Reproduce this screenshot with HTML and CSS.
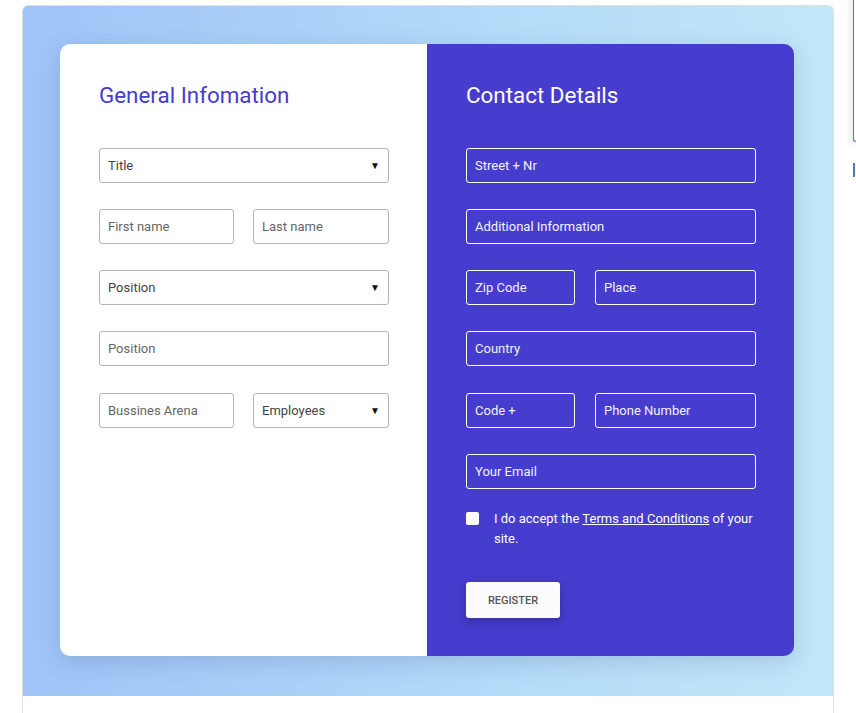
FILE: index.html
```html
<!DOCTYPE html>
<html>
<head>
<meta charset="utf-8">
<link rel="stylesheet" href="styles.css">
</head>
<body>
<div class="page">
  <div class="hero">
    <div class="card">
      <div class="panel panel-left">
        <h2 class="title title-left">General Infomation</h2>
        <div class="rows">
          <div class="field select"><span>Title</span><span class="arrow">&#9660;</span></div>
          <div class="row2 eq">
            <input class="field" placeholder="First name">
            <input class="field" placeholder="Last name">
          </div>
          <div class="field select"><span>Position</span><span class="arrow">&#9660;</span></div>
          <input class="field" placeholder="Position">
          <div class="row2 eq">
            <input class="field" placeholder="Bussines Arena">
            <div class="field select"><span>Employees</span><span class="arrow">&#9660;</span></div>
          </div>
        </div>
      </div>
      <div class="panel panel-right">
        <h2 class="title title-right">Contact Details</h2>
        <div class="rows">
          <input class="field dark" placeholder="Street + Nr">
          <input class="field dark" placeholder="Additional Information">
          <div class="row2 uneq">
            <input class="field dark" placeholder="Zip Code">
            <input class="field dark" placeholder="Place">
          </div>
          <input class="field dark" placeholder="Country">
          <div class="row2 uneq">
            <input class="field dark" placeholder="Code +">
            <input class="field dark" placeholder="Phone Number">
          </div>
          <input class="field dark" placeholder="Your Email">
        </div>
        <label class="terms">
          <span class="box"></span>
          <span class="terms-text">I do accept the <a href="#">Terms and Conditions</a> of your site.</span>
        </label>
        <button class="register">REGISTER</button>
      </div>
    </div>
  </div>
  <div class="below"></div>
</div>
<div class="edge-box"></div>
<div class="edge-mark"></div>
</body>
</html>
```
FILE: styles.css
```css
* { box-sizing: border-box; }
html, body { margin: 0; padding: 0; background: #fff; }
body {
  font-family: Roboto, "Liberation Sans", sans-serif;
  padding: 5px 0 0 22px;
  overflow: hidden;
  height: 713px;
}
.page {
  width: 812px;
  border: 1px solid #e0e0e0;
  border-bottom: none;
  border-radius: 6px 6px 0 0;
  overflow: hidden;
}
.hero {
  background: linear-gradient(to right, #a0c3f7 0%, #b4dbf8 60%, #c2e7f8 100%);
  padding: 38px 39px 40px 37px;
}
.below { height: 30px; background: #fff; }
.card {
  display: flex;
  height: 612px;
  border-radius: 10px;
  overflow: hidden;
  box-shadow: 0 6px 22px rgba(40, 60, 120, 0.18);
}
.panel {
  width: 367px;
  padding: 38px 38px 0 39px;
}
.panel-left { background: #fff; }
.panel-right { background: #463ccd; }
.title {
  margin: 0 0 40px;
  font-size: 22.4px;
  font-weight: 400;
  line-height: 26px;
  height: 26px;
}
.title-left { color: #463ccd; }
.title-right { color: #fff; }
.rows {
  display: flex;
  flex-direction: column;
  gap: 26px;
}
.rows > :nth-child(4) { margin-bottom: 1px; }
.row2 { display: grid; gap: 19px; }
.row2.eq { grid-template-columns: 135px 136px; }
.row2.uneq { grid-template-columns: 109px 161px; gap: 20px; }
.field {
  display: block;
  width: 100%;
  height: 35px;
  border: 1px solid #b5b5b5;
  border-radius: 3px;
  padding: 0 8px;
  font-family: Roboto, "Liberation Sans", sans-serif;
  font-size: 13px;
  color: #555;
  background: #fff;
  outline: none;
}
.field::placeholder { color: #666; }
.select {
  display: flex;
  align-items: center;
  justify-content: space-between;
  color: #444;
}
.arrow { font-size: 10px; color: #111; margin-right: 0; }
.field.dark {
  background: transparent;
  border: 1px solid #fff;
  border-radius: 3px;
  color: #fff;
}
.field.dark::placeholder { color: #f2f2ff; }
.terms {
  display: flex;
  align-items: flex-start;
  margin-top: 20px;
  gap: 15px;
  color: #fff;
  font-size: 13px;
  line-height: 20px;
}
.box {
  flex: none;
  width: 13px;
  height: 13px;
  margin-top: 3px;
  background: #fff;
  border-radius: 2px;
}
.terms-text a { color: #fff; text-decoration: underline; }
.register {
  display: block;
  margin-top: 33px;
  width: 94px;
  height: 36px;
  border: none;
  border-radius: 3px;
  background: #fbfbfd;
  color: #555;
  font-family: Roboto, "Liberation Sans", sans-serif;
  font-size: 11px;
  font-weight: 500;
  box-shadow: 0 3px 10px rgba(0, 0, 0, 0.25);
}
.edge-box {
  position: absolute;
  left: 853px;
  top: -4px;
  width: 20px;
  height: 146px;
  border-left: 1px solid #4a78c8;
  border-bottom: 1px solid #4a78c8;
  border-bottom-left-radius: 3px;
  background: #fff;
  box-shadow: -3px 2px 6px rgba(0,0,0,0.08);
}
.edge-mark {
  position: absolute;
  left: 853px;
  top: 163px;
  width: 2px;
  height: 14px;
  background: #4a78c8;
}
```
